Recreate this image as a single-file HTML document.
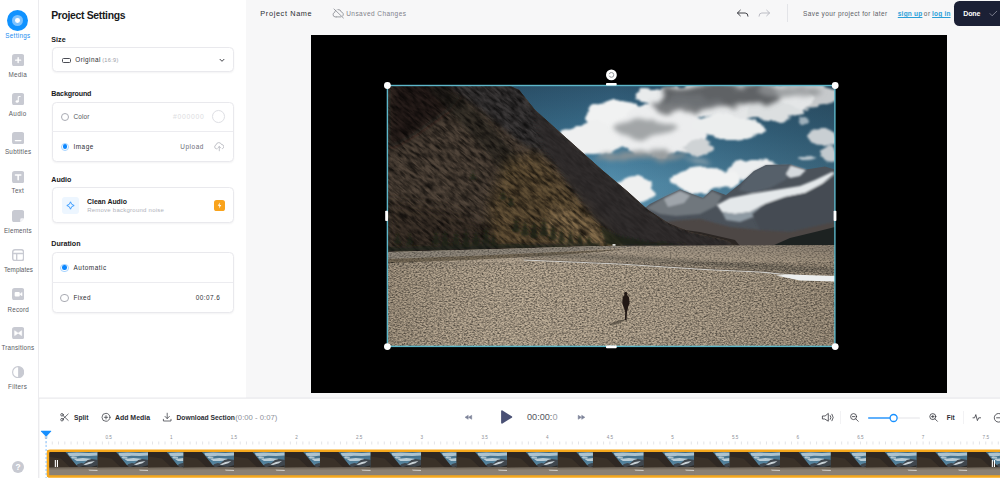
<!DOCTYPE html>
<html><head><meta charset="utf-8"><title>Editor</title>
<style>
*{box-sizing:border-box;margin:0;padding:0}
html,body{width:1000px;height:478px;overflow:hidden;background:#f7f7f8;font-family:"Liberation Sans",sans-serif;color:#18191b}
.abs{position:absolute}
#nav{position:absolute;left:0;top:0;width:38.8px;height:478px;background:#fff;border-right:1px solid #ebebee}
#panel{position:absolute;left:38.8px;top:0;width:207.2px;height:398px;background:#fff}
.box{position:absolute;left:51.5px;width:182.2px;border:1px solid #e9e9ed;border-radius:4.5px;background:#fff;box-shadow:0 1px 2px rgba(20,20,40,.05)}
.hr{position:absolute;left:52px;width:181px;height:1px;background:#ececf0}
.t{position:absolute;white-space:nowrap;line-height:1}
.radio{position:absolute;width:8.2px;height:8.2px;border-radius:50%;border:.8px solid #a9abb3;background:#fff}
.radio.on{border:1px solid #a5d3ff}
.radio.on::after{content:"";position:absolute;left:.9px;top:.9px;width:4.4px;height:4.4px;border-radius:50%;background:#0a86ff}
.ic{position:absolute;left:11.7px;width:12.3px;height:12.3px}
#canvas{position:absolute;left:311px;top:35px;width:636px;height:358px;background:#000}
#tl{position:absolute;left:39.8px;top:398px;width:961px;height:80px;background:#fff}
</style></head><body>
<div id="nav"></div>
<div id="panel"></div>
<!-- nav icons -->
<div class="abs" style="left:7.3px;top:10px;width:21px;height:21px;border-radius:50%;background:#0f92ff"></div>
<div class="abs" style="left:12.2px;top:14.900px;width:11.2px;height:11.2px;border-radius:50%;background:#7cc2ff"></div>
<div class="abs" style="left:15.4px;top:18.100px;width:4.8px;height:4.8px;border-radius:50%;background:#fff"></div>
<svg class="ic" style="top:53.700px" viewBox="0 0 12 12"><rect width="12" height="12" rx="2.600" fill="#c8cad2"/><path d="M6 3.600v4.800M3.600 6h4.800" stroke="#fff" stroke-width="1.400" stroke-linecap="round"/></svg>
<svg class="ic" style="top:92.700px" viewBox="0 0 12 12"><rect width="12" height="12" rx="2.600" fill="#c8cad2"/><ellipse cx="5" cy="8.300" rx="1.500" ry="1.200" fill="#fff"/><path d="M6.100 8.300V3.800Q6.800 3.200 8 3.400" stroke="#fff" stroke-width="1" fill="none" stroke-linecap="round"/></svg>
<svg class="ic" style="top:131.700px" viewBox="0 0 12 12"><rect width="12" height="12" rx="2.600" fill="#c8cad2"/><path d="M3.300 8.400h5.400" stroke="#fff" stroke-width="1.300" stroke-linecap="round"/></svg>
<svg class="ic" style="top:170.700px" viewBox="0 0 12 12"><rect width="12" height="12" rx="2.600" fill="#c8cad2"/><path d="M3.400 4h5.200M6 4v4.600" stroke="#fff" stroke-width="1.500" stroke-linecap="round"/></svg>
<svg class="ic" style="top:209.700px" viewBox="0 0 12 12"><path d="M2.600 0h6.800a2.600 2.600 0 0 1 2.600 2.600v5.400l-4 4h-5.400a2.600 2.600 0 0 1 -2.600 -2.600v-6.800a2.600 2.600 0 0 1 2.600 -2.600z" fill="#c8cad2"/><path d="M12 8l-4 4v-2.600a1.400 1.400 0 0 1 1.400 -1.400z" fill="#f6f6f9"/></svg>
<svg class="ic" style="top:248.700px" viewBox="0 0 12 12"><rect x=".7" y=".7" width="10.600" height="10.600" rx="2.200" fill="#fff" stroke="#c8cad2" stroke-width="1.400"/><path d="M1 4.400h10M4.600 4.400v6.600" stroke="#c8cad2" stroke-width="1.300"/></svg>
<svg class="ic" style="top:287.700px" viewBox="0 0 12 12"><rect width="12" height="12" rx="2.600" fill="#c8cad2"/><rect x="2.600" y="3.800" width="5" height="4.400" rx="1" fill="#fff"/><path d="M7.600 6l2.200 -1.700v3.400z" fill="#fff" stroke="#fff" stroke-width=".5" stroke-linejoin="round"/></svg>
<svg class="ic" style="top:326.700px" viewBox="0 0 12 12"><rect width="12" height="12" rx="2.600" fill="#c8cad2"/><path d="M2.600 3.600l3.400 2.400l-3.400 2.400zM9.400 3.600l-3.400 2.400l3.400 2.400z" fill="#fff" stroke="#fff" stroke-width=".6" stroke-linejoin="round"/></svg>
<svg class="ic" style="top:365.700px" viewBox="0 0 12 12"><circle cx="6" cy="6" r="5.400" fill="#fff" stroke="#c8cad2" stroke-width="1.100"/><path d="M6 .6a5.400 5.400 0 0 1 0 10.800z" fill="#c8cad2"/></svg>
<div class="abs" style="left:11.6px;top:460.800px;width:12.4px;height:12.4px;border-radius:50%;background:#c8cad2"></div>
<div class="t" style="left:15.5px;top:462.800px;font-size:8.400px;font-weight:bold;color:#fff">?</div>
<!-- panel boxes -->
<div class="box" style="top:47.200px;height:25.200px"></div>
<div class="abs" style="left:62px;top:57.600px;width:8.600px;height:5px;border:.8px solid #4a4c54;border-radius:1.500px"></div>
<svg class="abs" style="left:219px;top:57.500px" width="6" height="5" viewBox="0 0 6 5"><path d="M1 1.300l2 2l2 -2" fill="none" stroke="#2b2d33" stroke-width=".9" stroke-linecap="round" stroke-linejoin="round"/></svg>
<div class="box" style="top:101.500px;height:60.300px"></div>
<div class="hr" style="top:130.800px"></div>
<div class="radio" style="left:60.700px;top:112.600px"></div>
<div class="abs" style="left:212.100px;top:110.300px;width:12.800px;height:12.800px;border-radius:50%;border:.9px solid #dedfe4;background:#fff"></div>
<div class="radio on" style="left:60.700px;top:142.600px"></div>
<svg class="abs" style="left:213.500px;top:142px" width="10.500" height="9.500" viewBox="0 0 10.500 9.500"><g fill="none" stroke="#a9abb3" stroke-width=".7" stroke-linecap="round" stroke-linejoin="round"><path d="M3 6.800h-.600a2 2 0 0 1 -.300 -3.900a2.800 2.800 0 0 1 5.400 -.400a2.200 2.200 0 0 1 1 4.200"/><path d="M5.300 8.800v-4.200M3.900 5.900l1.400 -1.400l1.400 1.400"/></g></svg>
<div class="box" style="top:187.300px;height:35.800px"></div>
<div class="abs" style="left:61.600px;top:197px;width:17px;height:17px;border-radius:3px;background:#edf6ff"></div>
<svg class="abs" style="left:65.500px;top:201.200px" width="9" height="9" viewBox="0 0 9 9"><path d="M4.500 .8Q5 3.900 8.200 4.500Q5 5.100 4.500 8.200Q4 5.100 .8 4.500Q4 3.900 4.500 .8Z" fill="none" stroke="#1a8cff" stroke-width=".8" stroke-linejoin="round"/></svg>
<div class="abs" style="left:214.300px;top:200.300px;width:10.600px;height:10.700px;border-radius:2.600px;background:#f9a31c"></div>
<svg class="abs" style="left:217.100px;top:202.300px" width="5" height="7" viewBox="0 0 5 7"><path d="M3 .4L.7 3.800h1.700L2 6.600L4.300 3.100H2.600z" fill="#fff"/></svg>
<div class="box" style="top:252px;height:60.600px"></div>
<div class="hr" style="top:282px"></div>
<div class="radio on" style="left:60.400px;top:263.500px"></div>
<div class="radio" style="left:60.400px;top:293.700px"></div>
<!-- top bar -->
<svg class="abs" style="left:332px;top:8px" width="13" height="11" viewBox="0 0 13 11"><g fill="none" stroke="#7f818a" stroke-width=".75" stroke-linecap="round" stroke-linejoin="round"><path d="M4.200 8.900h-1a2.300 2.300 0 0 1 -.500 -4.500a3.300 3.300 0 0 1 1.200 -2.300M5.900 1.500a3.300 3.300 0 0 1 3.500 2.600a2.400 2.400 0 0 1 1.300 4M4.200 8.900h4.600"/><path d="M2 1l9.400 9"/></g></svg>
<svg class="abs" style="left:735.500px;top:8px" width="36" height="11" viewBox="0 0 36 11"><g fill="none" stroke-width=".9" stroke-linecap="round" stroke-linejoin="round"><path d="M4.300 2.200L1.400 5l2.900 2.800M1.600 5h7.600q2.800 0 2.800 3.200" stroke="#2b2d33"/><path d="M30.700 2.200L33.600 5l-2.900 2.800M33.400 5h-7.600q-2.800 0 -2.800 3.200" stroke="#b4b6be"/></g></svg>
<div class="abs" style="left:787.200px;top:4px;width:.9px;height:17.500px;background:#e3e4e8"></div>
<div class="abs" style="left:953.800px;top:.8px;width:60px;height:25.200px;background:#1b2035;border-radius:5.500px 0 0 5.500px"></div>
<svg class="abs" style="left:989px;top:10px" width="9" height="7" viewBox="0 0 9 7"><path d="M1 3.600l2.100 2.200l4.700 -4.600" fill="none" stroke="#8e91a0" stroke-width=".8" stroke-linecap="round" stroke-linejoin="round"/></svg>
<div class="t" style="left:5.27px;top:32.52px;font-size:6.3px;font-weight:normal;color:#1b8cf0;letter-spacing:0.320px;">Settings</div>
<div class="t" style="left:8.62px;top:71.72px;font-size:6.3px;font-weight:normal;color:#5a5c64;letter-spacing:0.225px;">Media</div>
<div class="t" style="left:8.82px;top:110.62px;font-size:6.3px;font-weight:normal;color:#5a5c64;letter-spacing:0.312px;">Audio</div>
<div class="t" style="left:4.92px;top:149.22px;font-size:6.3px;font-weight:normal;color:#5a5c64;letter-spacing:0.262px;">Subtitles</div>
<div class="t" style="left:11.62px;top:188.12px;font-size:6.3px;font-weight:normal;color:#5a5c64;letter-spacing:0.165px;">Text</div>
<div class="t" style="left:3.92px;top:227.52px;font-size:6.3px;font-weight:normal;color:#5a5c64;letter-spacing:0.215px;">Elements</div>
<div class="t" style="left:3.92px;top:266.72px;font-size:6.3px;font-weight:normal;color:#5a5c64;letter-spacing:0.032px;">Templates</div>
<div class="t" style="left:7.52px;top:306.52px;font-size:6.3px;font-weight:normal;color:#5a5c64;letter-spacing:0.189px;">Record</div>
<div class="t" style="left:1.52px;top:344.82px;font-size:6.3px;font-weight:normal;color:#5a5c64;letter-spacing:0.199px;">Transitions</div>
<div class="t" style="left:8.12px;top:384.02px;font-size:6.3px;font-weight:normal;color:#5a5c64;letter-spacing:0.267px;">Filters</div>
<div class="t" style="left:51.13px;top:11.22px;font-size:10.4px;font-weight:bold;color:#18191b;letter-spacing:-0.314px;">Project Settings</div>
<div class="t" style="left:51.32px;top:36.63px;font-size:7.1px;font-weight:bold;color:#18191b;letter-spacing:0.050px;">Size</div>
<div class="t" style="left:75.22px;top:57.07px;font-size:6.4px;font-weight:normal;color:#2b2d33;letter-spacing:0.448px;">Original</div>
<div class="t" style="left:102.16px;top:57.56px;font-size:5.6px;font-weight:normal;color:#9a9ca5;letter-spacing:0.309px;">(16:9)</div>
<div class="t" style="left:51.32px;top:90.53px;font-size:7.1px;font-weight:bold;color:#18191b;letter-spacing:-0.143px;">Background</div>
<div class="t" style="left:73.42px;top:113.87px;font-size:6.4px;font-weight:normal;color:#55575e;letter-spacing:0.172px;">Color</div>
<div class="t" style="left:172.99px;top:113.88px;font-size:6.8px;font-weight:normal;color:#dcdde1;letter-spacing:0.725px;">#000000</div>
<div class="t" style="left:73.42px;top:143.57px;font-size:6.4px;font-weight:normal;color:#2b2d33;letter-spacing:0.551px;">Image</div>
<div class="t" style="left:180.32px;top:143.87px;font-size:6.4px;font-weight:normal;color:#6a6c75;letter-spacing:0.560px;">Upload</div>
<div class="t" style="left:51.32px;top:176.53px;font-size:7.1px;font-weight:bold;color:#18191b;letter-spacing:0.002px;">Audio</div>
<div class="t" style="left:87.09px;top:198.63px;font-size:6.9px;font-weight:bold;color:#18191b;letter-spacing:-0.013px;">Clean Audio</div>
<div class="t" style="left:87.14px;top:207.47px;font-size:6.0px;font-weight:normal;color:#b0b2ba;letter-spacing:0.247px;">Remove background noise</div>
<div class="t" style="left:51.32px;top:241.13px;font-size:7.1px;font-weight:bold;color:#18191b;letter-spacing:0.004px;">Duration</div>
<div class="t" style="left:73.52px;top:265.27px;font-size:6.4px;font-weight:normal;color:#2b2d33;letter-spacing:0.531px;">Automatic</div>
<div class="t" style="left:73.52px;top:294.67px;font-size:6.4px;font-weight:normal;color:#2b2d33;letter-spacing:0.357px;">Fixed</div>
<div class="t" style="left:195.72px;top:294.67px;font-size:6.4px;font-weight:normal;color:#2b2d33;letter-spacing:0.473px;">00:07.6</div>
<div class="t" style="left:260.36px;top:9.83px;font-size:7.3px;font-weight:normal;color:#2b2d33;letter-spacing:0.643px;">Project Name</div>
<div class="t" style="left:346.21px;top:11.02px;font-size:6.5px;font-weight:normal;color:#7f818a;letter-spacing:0.450px;">Unsaved Changes</div>
<div class="t" style="left:803.11px;top:10.92px;font-size:6.5px;font-weight:normal;color:#5c5e66;letter-spacing:0.371px;">Save your project for later</div>
<div class="t" style="left:897.81px;top:10.92px;font-size:6.5px;font-weight:bold;color:#2a9fd8;letter-spacing:0.212px;text-decoration:underline;text-decoration-thickness:.5px;text-underline-offset:1px">sign up</div>
<div class="t" style="left:923.81px;top:10.92px;font-size:6.5px;font-weight:normal;color:#5c5e66;letter-spacing:0.599px;">or</div>
<div class="t" style="left:932.11px;top:10.92px;font-size:6.5px;font-weight:bold;color:#2a9fd8;letter-spacing:0.187px;text-decoration:underline;text-decoration-thickness:.5px;text-underline-offset:1px">log in</div>
<div class="t" style="left:963.28px;top:10.18px;font-size:7.0px;font-weight:bold;color:#ffffff;letter-spacing:-0.120px;">Done</div>
<div id="canvas"></div>
<svg id="photo" class="abs" style="left:388px;top:86px" width="447" height="260" viewBox="388 86 447 260" preserveAspectRatio="none">
 <defs>
  <linearGradient id="sky" x1="0" y1="0" x2="0" y2="1">
   <stop offset="0" stop-color="#2e5670"/><stop offset=".3" stop-color="#3b708e"/><stop offset=".6" stop-color="#548eac"/><stop offset="1" stop-color="#6299b5"/>
  </linearGradient>
  <linearGradient id="skyv" x1="0" y1="0" x2="1" y2="0">
   <stop offset="0" stop-color="#10222f" stop-opacity=".35"/><stop offset=".5" stop-color="#10222f" stop-opacity="0"/><stop offset="1" stop-color="#1c2f3b" stop-opacity=".4"/>
  </linearGradient>
  <linearGradient id="mtn" x1="0" y1="0" x2="1" y2="1">
   <stop offset="0" stop-color="#241e19"/><stop offset=".4" stop-color="#372d24"/><stop offset=".7" stop-color="#46392b"/><stop offset="1" stop-color="#4c3f2f"/>
  </linearGradient>
  <linearGradient id="gnd" x1="0" y1="0" x2="0" y2="1">
   <stop offset="0" stop-color="#9c8f7e"/><stop offset=".25" stop-color="#bfae96"/><stop offset="1" stop-color="#c0af97"/>
  </linearGradient>
  <linearGradient id="gndv" x1="0" y1="0" x2="1" y2="0">
   <stop offset="0" stop-color="#000" stop-opacity=".1"/><stop offset=".3" stop-color="#fff" stop-opacity=".05"/><stop offset="1" stop-color="#000" stop-opacity=".12"/>
  </linearGradient>
  <filter id="blur2" x="-20%" y="-20%" width="140%" height="140%"><feGaussianBlur stdDeviation="2.2"/></filter>
  <filter id="blur4" x="-20%" y="-20%" width="140%" height="140%"><feGaussianBlur stdDeviation="5"/></filter>
  <filter id="blur1" x="-20%" y="-20%" width="140%" height="140%"><feGaussianBlur stdDeviation=".8"/></filter>
  <filter id="cloud" x="-10%" y="-10%" width="120%" height="120%">
   <feTurbulence type="fractalNoise" baseFrequency="0.045 0.07" numOctaves="3" seed="3" result="n"/>
   <feDisplacementMap in="SourceGraphic" in2="n" scale="14" xChannelSelector="R" yChannelSelector="G" result="d"/>
   <feGaussianBlur in="d" stdDeviation="1.3"/>
  </filter>
  <filter id="cloud2" x="-10%" y="-20%" width="120%" height="140%">
   <feTurbulence type="fractalNoise" baseFrequency="0.04 0.08" numOctaves="3" seed="8" result="n"/>
   <feDisplacementMap in="SourceGraphic" in2="n" scale="16" xChannelSelector="R" yChannelSelector="G" result="d"/>
   <feGaussianBlur in="d" stdDeviation="2.4"/>
  </filter>
  <filter id="rock" x="0" y="0" width="100%" height="100%">
   <feTurbulence type="fractalNoise" baseFrequency="0.09 0.4" numOctaves="4" seed="4" result="n"/>
   <feColorMatrix in="n" type="matrix" values="0 0 0 0 0  0 0 0 0 0  0 0 0 0 0  2.6 0 0 0 -1.0" result="a"/>
   <feComposite in="a" in2="SourceGraphic" operator="in"/>
  </filter>
  <filter id="rockl" x="0" y="0" width="100%" height="100%">
   <feTurbulence type="fractalNoise" baseFrequency="0.08 0.36" numOctaves="4" seed="17" result="n"/>
   <feColorMatrix in="n" type="matrix" values="0 0 0 0 0  0 0 0 0 0  0 0 0 0 0  2.8 0 0 0 -1.25" result="a"/>
   <feComposite in="a" in2="SourceGraphic" operator="in"/>
  </filter>
  <filter id="gravel" x="0" y="0" width="100%" height="100%">
   <feTurbulence type="fractalNoise" baseFrequency="0.5 0.8" numOctaves="2" seed="9" result="n"/>
   <feColorMatrix in="n" type="matrix" values="0 0 0 0 0  0 0 0 0 0  0 0 0 0 0  2.4 0 0 0 -0.95" result="a"/>
   <feComposite in="a" in2="SourceGraphic" operator="in"/>
  </filter>
  <filter id="gravell" x="0" y="0" width="100%" height="100%">
   <feTurbulence type="fractalNoise" baseFrequency="0.45 0.75" numOctaves="2" seed="21" result="n"/>
   <feColorMatrix in="n" type="matrix" values="0 0 0 0 0  0 0 0 0 0  0 0 0 0 0  2.4 0 0 0 -1.0" result="a"/>
   <feComposite in="a" in2="SourceGraphic" operator="in"/>
  </filter>
  <clipPath id="pclip"><rect x="388" y="86" width="447" height="260"/></clipPath>
  <clipPath id="mclip"><path d="M388 86 L510 86 L519 90 L535 110 L602 170 L627 191 L648 210 L669 223.500 L690 232 L712 237 L727 240.500 L736 245 L700 246 L600 246 L500 249 L388 252Z"/></clipPath>
 </defs>
 <g clip-path="url(#pclip)">
 <rect x="388" y="86" width="447" height="162" fill="url(#sky)"/>
 <rect x="388" y="86" width="447" height="162" fill="url(#skyv)"/>
 <!-- clouds -->
 <g filter="url(#cloud)">
  <ellipse cx="800" cy="95" rx="44" ry="12" fill="#c6c9cb"/>
  <ellipse cx="728" cy="100" rx="84" ry="17" fill="#e4e6e7"/>
  <ellipse cx="650" cy="97" rx="16" ry="8" fill="#e9ebec"/>
  <ellipse cx="612" cy="116" rx="28" ry="14" fill="#f1f2f2"/>
  <ellipse cx="592" cy="139" rx="32" ry="16" fill="#eff0f0"/>
  <ellipse cx="662" cy="131" rx="46" ry="26" fill="#ecedee"/>
  <ellipse cx="728" cy="127" rx="34" ry="12" fill="#eceeee"/>
  <ellipse cx="775" cy="111" rx="30" ry="8" fill="#dcdfe0"/>
  <ellipse cx="700" cy="148" rx="16" ry="7" fill="#cfd3d5"/>
  <ellipse cx="822" cy="137" rx="13" ry="9" fill="#c9cfd3"/>
  <ellipse cx="829" cy="154" rx="8" ry="9" fill="#c2c9ce"/>
  <ellipse cx="806" cy="120" rx="7" ry="3" fill="#9fb0bb"/>
  <ellipse cx="806" cy="160" rx="9" ry="3" fill="#b9c6ce"/>
  <ellipse cx="758" cy="169" rx="32" ry="9" fill="#eceeef"/>
  <ellipse cx="706" cy="179" rx="36" ry="12" fill="#f1f2f2"/>
  <ellipse cx="635" cy="190" rx="19" ry="13" fill="#eff0f0"/>
 </g>
 <g filter="url(#cloud2)">
  <ellipse cx="722" cy="96" rx="62" ry="12" fill="#5f6265"/>
  <ellipse cx="690" cy="104" rx="36" ry="8" fill="#6e7174" opacity=".9"/>
  <ellipse cx="790" cy="91" rx="36" ry="5" fill="#8d9194" opacity=".8"/>
  <ellipse cx="644" cy="128" rx="32" ry="9" fill="#9a9da0" opacity=".9"/>
  <ellipse cx="640" cy="155" rx="48" ry="5" fill="#8f9396" opacity=".9"/>
  <ellipse cx="700" cy="160" rx="10" ry="3" fill="#a9b4ba" opacity=".8"/>
 </g>
 <!-- snow mountain -->
 <path d="M640 212 L650 204 L666 196 L680 189.500 L692 194 L703 198 L712 190 L726 195 L740 184 L754 171 L766 165 L791 164.500 L806 169.500 L825 166.500 L835 169.500 L835 248 L640 248Z" fill="#4b525a"/>
 <g filter="url(#blur1)">
  <path d="M646 208 L666 196.500 L680 190 L692 194.500 L703 198.500 L712 191 L722 196 L716 206 L700 214 L676 216 L660 214Z" fill="#70777d"/>
  <path d="M664 199 L680 191 L690 195.500 L684 203 L668 207Z" fill="#a4aab0" opacity=".9"/>
  <path d="M738 190 L748 177 L754 171.500 L766 165.500 L791 165 L795 170 L785 180 L770 188 L752 193Z" fill="#56616b"/>
  <path d="M791 165.500 L806 170 L800 176 L790 178 L786 174Z" fill="#d5dade"/>
  <path d="M717 205 L730 198 L750 194 L775 190 L800 186 L815 180 L832 172 L835 173 L822 184 L805 193 L785 197 L765 204 L750 212 L735 214 L722 212Z" fill="#e4e8ea"/>
  <path d="M722 212 L735 214 L750 212 L760 207 L756 216 L740 222 L726 220Z" fill="#8e9aa3"/>
  <path d="M765 204 L785 197 L805 193 L822 184 L835 176 L835 224 L790 232 L760 230 L752 214Z" fill="#454b52"/>
  <path d="M640 230 L670 221 L700 219 L730 227 L760 230 L790 232 L835 222 L835 248 L640 248Z" fill="#4e4744"/>
 </g>
 <path d="M655 226 L700 232 L735 240 L740 246 L640 247Z" fill="#2b2623"/>
 <path d="M772 246 L790 238 L815 232 L835 227 L835 247Z" fill="#1d2221"/>
 <!-- main mountain -->
 <path d="M388 86 L510 86 L519 90 L535 110 L602 170 L627 191 L648 210 L669 223.500 L690 232 L712 237 L727 240.500 L736 245 L700 246 L600 246 L500 249 L388 252Z" fill="url(#mtn)"/>
 <g clip-path="url(#mclip)">
  <path d="M388 86 L731 86 L731 252 L388 252Z" fill="#51453a"/>
  <path d="M388 70 L480 70 L450 110 L415 135 L388 150Z" fill="#15110e" opacity=".7" filter="url(#blur4)"/>
  <path d="M388 200 L450 210 L520 236 L540 252 L388 256Z" fill="#352c23" opacity=".6" filter="url(#blur4)"/>
  <path d="M440 80 L515 80 L535 110 L602 170 L627 191 L648 210 L669 223.500 L690 232 L712 237 L727 240.500 L738 246 L628 248 L592 216 L556 164 L520 142 L478 108Z" fill="#3a3738" filter="url(#blur2)"/>
  <path d="M426 86 L446 86 L480 114 L512 150 L540 196 L556 232 L540 240 L520 204 L494 160 L462 124Z" fill="#22231b" opacity=".55" filter="url(#blur2)"/>
  <path d="M506 160 L538 152 L574 190 L624 247 L494 249 L488 206Z" fill="#6a5638" opacity=".8" filter="url(#blur4)"/><path d="M552 204 L574 210 L600 228 L626 247 L556 249 L544 228Z" fill="#8a7250" opacity=".8" filter="url(#blur2)"/>
  <rect transform="rotate(40 560 170)" x="300" y="-60" width="540" height="470" fill="#120e0b" filter="url(#rock)" opacity=".5"/>
  <rect transform="rotate(40 560 170)" x="300" y="-60" width="540" height="470" fill="#a08f79" filter="url(#rockl)" opacity=".6"/>
  <path d="M530 104 L602 170 L627 191 L648 210 L669 223.500 L690 232 L712 237 L727 240.500 L740 247 L630 249 L594 218 L562 176 L542 146Z" fill="#2f2c2b" opacity=".72" filter="url(#blur2)"/>
 </g>
 <!-- trees -->
 <g fill="#1d2118" opacity=".8" filter="url(#blur1)">
  <path d="M394 244 l3.500 -12 l3.500 12z M406 246 l3.500 -14 l3.500 12z M432 244 l4 -16 l4 16z M441 246 l4 -18 l4 18z M452 245 l4 -15 l4 15z M462 247 l4 -20 l4 20z M472 246 l4 -17 l4 17z M482 244 l4 -19 l4 19z M490 246 l3.500 -14 l3.500 14z M512 232 l4 -16 l4 16z M521 236 l4 -17 l4 17z M530 238 l4 -18 l4 18z M540 236 l4 -20 l4 20z M549 240 l4 -17 l4 17z M558 242 l3.500 -15 l3.500 15z M567 243 l3.500 -14 l3.500 14z M577 243 l3 -12 l3 12z M586 245 l3 -11 l3 11z M500 200 l3 -12 l3 12z M508 206 l3 -12 l3 12z M470 180 l3 -10 l3 10z"/>
  <path d="M600 226 L620 236 L650 242 L690 244 L640 246 L606 245Z"/>
  <path d="M388 247 L500 244 L600 243 L600 247 L500 249.500 L388 252.500Z" opacity=".8"/>
 </g>
 <!-- ground -->
 <path d="M388 252 L500 249 L600 246 L835 245 L835 346 L388 346Z" fill="url(#gnd)"/>
 <path d="M388 252 L500 249 L600 246 L835 245 L835 346 L388 346Z" fill="url(#gndv)"/>
 <path d="M388 252 L500 249 L600 246 L640 246 L560 252 L470 256 L388 259Z" fill="#8e867a"/>
 <path d="M388 259 L470 256 L560 252 L630 249 L560 255 L470 260 L388 263Z" fill="#675b49" opacity=".8"/>
 <path d="M510 257 L600 260 L700 266 L790 272 L835 274 L835 268 L700 260 L600 254 L540 254Z" fill="#5a544c" opacity=".45" filter="url(#blur1)"/>
 <path d="M388 252 L500 249 L600 246 L835 245 L835 346 L388 346Z" fill="#3a3025" filter="url(#gravel)" opacity=".36"/>
 <path d="M388 262 L835 262 L835 346 L388 346Z" fill="#dccdb6" filter="url(#gravell)" opacity=".45"/>
 <path d="M524 260 L620 264 L705 269.500 L760 272 L800 276" stroke="#d4d4d2" stroke-width="1.200" fill="none" opacity=".9"/>
 <path d="M524 259 L620 263 L705 268.500 L760 271 L800 274" stroke="#4d463d" stroke-width=".8" fill="none" opacity=".6"/>
 <path d="M776 275.500 L790 274.500 L835 276 L835 281.500 L800 280.500Z" fill="#eceeee"/>
 <rect x="612.500" y="244" width="3" height="1.800" fill="#d9d9d6"/>
 <!-- person -->
 <ellipse cx="617" cy="322.500" rx="8" ry="1.300" fill="#3f382f" opacity=".6" transform="rotate(-18 617 322.500)"/>
 <path d="M624.500 295 a1.700 1.900 0 1 1 2.600 0 l1.900 2.200 l.6 6.300 l-1.500 3.500 l-1.100 5.500 l-.5 7.700 l-1.700 0 l.4 -7.700 l-1.200 -4.500 l-1.700 -4.500 l.4 -6.300z" fill="#211815"/>
 </g>
</svg>

<div id="tl"></div>
<svg id="sel" class="abs" style="left:370px;top:60px" width="490" height="300" viewBox="370 60 490 300">
 <rect x="387.400" y="85.500" width="447.500" height="260.900" fill="none" stroke="#5db7ca" stroke-width="1.400"/>
 <g fill="#fff">
  <circle cx="387.400" cy="85.500" r="3.400"/><circle cx="835.200" cy="85.500" r="3.400"/><circle cx="387.400" cy="346.600" r="3.400"/><circle cx="835.200" cy="346.600" r="3.400"/>
  <rect x="606" y="83" width="10.700" height="2.600" rx=".8"/><rect x="606" y="345.600" width="10.700" height="2.600" rx=".8"/>
  <rect x="385.200" y="210.800" width="2.800" height="10.300" rx=".8"/><rect x="833.600" y="210.800" width="2.800" height="10.300" rx=".8"/>
  <circle cx="611.400" cy="74.900" r="5.400"/>
 </g>
 <circle cx="611.400" cy="74.900" r="2.400" fill="none" stroke="#8a8c92" stroke-width=".9" stroke-dasharray="6 1.500"/>
</svg>

<svg id="tlsvg" class="abs" style="left:39px;top:397px" width="961" height="81" viewBox="39 397 961 81">
<defs>
 <linearGradient id="tsky" x1="0" y1="0" x2="0" y2="1"><stop offset="0" stop-color="#3c6680"/><stop offset="1" stop-color="#5e8ea8"/></linearGradient>
 <g id="thg">
  <rect x="0" y="0" width="52" height="17.500" fill="url(#tsky)"/>
  <path d="M21 2.600 L30 2 L42 2.600 L51 2 L51 5 L42 5.600 L34 5.200 L26 6.200 L22 5Z" fill="#b9ccd6" opacity=".9"/>
  <path d="M27 8.400 L36 7.600 L44 8.200 L44 10 L36 10.600 L30 10.400Z" fill="#cfdce2" opacity=".85"/>
  <path d="M24 6.500 L30 6.800 L30 8 L25.500 8Z" fill="#dfe7ea" opacity=".8"/>
  <path d="M27 17.500 L31 13.500 L34.500 12.500 L37 13 L41 9.500 L45 8.500 L52 9.500 L52 17.500Z" fill="#3f464d"/>
  <path d="M36.500 14 L42 11.600 L48 10.400 L45 12.800 L39 14.600Z" fill="#c9d2d7"/><path d="M30 17.500 L36 15.500 L44 16.500 L52 14.500 L52 17.500Z" fill="#2b2927"/>
  <path d="M0 0 L17.400 0 L22 5.500 L30.400 15.800 L33 17.600 L0 17.800Z" fill="#2f2823"/>
  <path d="M0 6 L14 8 L24 17.600 L0 17.800Z" fill="#3d3329" opacity=".8"/>
  <path d="M0 17.300 L22 17 L52 16.800 L52 26 L0 26Z" fill="#8b8073"/>
  <path d="M0 17.300 L22 17 L52 16.800 L52 18.600 L0 19Z" fill="#6f665b" opacity=".7"/>
  <path d="M41.500 19.300 L51 19.600 L51 20.300 L42.500 20Z" fill="#e6e7e6"/>
 </g>
</defs>
<rect x="39" y="397.600" width="961" height="1" fill="#e4e4e8"/>
<path d="M46.00 441.500v3 M52.27 441.500v3 M58.53 441.500v3 M64.80 441.500v3 M71.06 441.500v3 M77.33 441.500v3 M83.59 441.500v3 M89.85 441.500v3 M96.12 441.500v3 M102.38 441.500v3 M108.65 441.500v3 M114.91 441.500v3 M121.18 441.500v3 M127.44 441.500v3 M133.71 441.500v3 M139.97 441.500v3 M146.24 441.500v3 M152.50 441.500v3 M158.77 441.500v3 M165.03 441.500v3 M171.30 441.500v3 M177.56 441.500v3 M183.83 441.500v3 M190.09 441.500v3 M196.36 441.500v3 M202.62 441.500v3 M208.89 441.500v3 M215.16 441.500v3 M221.42 441.500v3 M227.69 441.500v3 M233.95 441.500v3 M240.22 441.500v3 M246.48 441.500v3 M252.74 441.500v3 M259.01 441.500v3 M265.27 441.500v3 M271.54 441.500v3 M277.80 441.500v3 M284.07 441.500v3 M290.33 441.500v3 M296.60 441.500v3 M302.87 441.500v3 M309.13 441.500v3 M315.39 441.500v3 M321.66 441.500v3 M327.93 441.500v3 M334.19 441.500v3 M340.45 441.500v3 M346.72 441.500v3 M352.98 441.500v3 M359.25 441.500v3 M365.51 441.500v3 M371.78 441.500v3 M378.04 441.500v3 M384.31 441.500v3 M390.57 441.500v3 M396.84 441.500v3 M403.10 441.500v3 M409.37 441.500v3 M415.63 441.500v3 M421.90 441.500v3 M428.16 441.500v3 M434.43 441.500v3 M440.69 441.500v3 M446.96 441.500v3 M453.22 441.500v3 M459.49 441.500v3 M465.75 441.500v3 M472.02 441.500v3 M478.28 441.500v3 M484.55 441.500v3 M490.81 441.500v3 M497.08 441.500v3 M503.34 441.500v3 M509.61 441.500v3 M515.88 441.500v3 M522.14 441.500v3 M528.40 441.500v3 M534.67 441.500v3 M540.93 441.500v3 M547.20 441.500v3 M553.46 441.500v3 M559.73 441.500v3 M566.00 441.500v3 M572.26 441.500v3 M578.52 441.500v3 M584.79 441.500v3 M591.05 441.500v3 M597.32 441.500v3 M603.58 441.500v3 M609.85 441.500v3 M616.12 441.500v3 M622.38 441.500v3 M628.64 441.500v3 M634.91 441.500v3 M641.17 441.500v3 M647.44 441.500v3 M653.70 441.500v3 M659.97 441.500v3 M666.24 441.500v3 M672.50 441.500v3 M678.76 441.500v3 M685.03 441.500v3 M691.29 441.500v3 M697.56 441.500v3 M703.82 441.500v3 M710.09 441.500v3 M716.36 441.500v3 M722.62 441.500v3 M728.88 441.500v3 M735.15 441.500v3 M741.41 441.500v3 M747.68 441.500v3 M753.94 441.500v3 M760.21 441.500v3 M766.47 441.500v3 M772.74 441.500v3 M779.00 441.500v3 M785.27 441.500v3 M791.53 441.500v3 M797.80 441.500v3 M804.06 441.500v3 M810.33 441.500v3 M816.59 441.500v3 M822.86 441.500v3 M829.12 441.500v3 M835.39 441.500v3 M841.65 441.500v3 M847.92 441.500v3 M854.18 441.500v3 M860.45 441.500v3 M866.71 441.500v3 M872.98 441.500v3 M879.25 441.500v3 M885.51 441.500v3 M891.77 441.500v3 M898.04 441.500v3 M904.30 441.500v3 M910.57 441.500v3 M916.83 441.500v3 M923.10 441.500v3 M929.37 441.500v3 M935.63 441.500v3 M941.89 441.500v3 M948.16 441.500v3 M954.42 441.500v3 M960.69 441.500v3 M966.95 441.500v3 M973.22 441.500v3 M979.48 441.500v3 M985.75 441.500v3 M992.01 441.500v3 M998.28 441.500v3" stroke="#dcdde2" stroke-width=".8" fill="none"/>
<text x="46.0" y="439.300" font-size="4.600" fill="#8d8f98" text-anchor="middle" font-family="Liberation Sans, sans-serif">0</text>
<text x="108.7" y="439.300" font-size="4.600" fill="#8d8f98" text-anchor="middle" font-family="Liberation Sans, sans-serif">0.5</text>
<text x="171.3" y="439.300" font-size="4.600" fill="#8d8f98" text-anchor="middle" font-family="Liberation Sans, sans-serif">1</text>
<text x="233.9" y="439.300" font-size="4.600" fill="#8d8f98" text-anchor="middle" font-family="Liberation Sans, sans-serif">1.5</text>
<text x="296.6" y="439.300" font-size="4.600" fill="#8d8f98" text-anchor="middle" font-family="Liberation Sans, sans-serif">2</text>
<text x="359.2" y="439.300" font-size="4.600" fill="#8d8f98" text-anchor="middle" font-family="Liberation Sans, sans-serif">2.5</text>
<text x="421.9" y="439.300" font-size="4.600" fill="#8d8f98" text-anchor="middle" font-family="Liberation Sans, sans-serif">3</text>
<text x="484.6" y="439.300" font-size="4.600" fill="#8d8f98" text-anchor="middle" font-family="Liberation Sans, sans-serif">3.5</text>
<text x="547.2" y="439.300" font-size="4.600" fill="#8d8f98" text-anchor="middle" font-family="Liberation Sans, sans-serif">4</text>
<text x="609.9" y="439.300" font-size="4.600" fill="#8d8f98" text-anchor="middle" font-family="Liberation Sans, sans-serif">4.5</text>
<text x="672.5" y="439.300" font-size="4.600" fill="#8d8f98" text-anchor="middle" font-family="Liberation Sans, sans-serif">5</text>
<text x="735.1" y="439.300" font-size="4.600" fill="#8d8f98" text-anchor="middle" font-family="Liberation Sans, sans-serif">5.5</text>
<text x="797.8" y="439.300" font-size="4.600" fill="#8d8f98" text-anchor="middle" font-family="Liberation Sans, sans-serif">6</text>
<text x="860.4" y="439.300" font-size="4.600" fill="#8d8f98" text-anchor="middle" font-family="Liberation Sans, sans-serif">6.5</text>
<text x="923.1" y="439.300" font-size="4.600" fill="#8d8f98" text-anchor="middle" font-family="Liberation Sans, sans-serif">7</text>
<text x="985.8" y="439.300" font-size="4.600" fill="#8d8f98" text-anchor="middle" font-family="Liberation Sans, sans-serif">7.5</text>
<clipPath id="trk"><rect x="47.400" y="450.400" width="960" height="26.400" rx="1.500"/></clipPath>
<rect x="47.400" y="450.400" width="960" height="26.400" fill="#4a433c"/>
<g clip-path="url(#trk)">
<svg x="46.80" y="450.500" width="51.40" height="26" viewBox="0 0 51.40 26" preserveAspectRatio="none"><use href="#thg"/></svg>
<svg x="97.40" y="450.500" width="51.40" height="26" viewBox="0 0 51.40 26" preserveAspectRatio="none"><use href="#thg"/></svg>
<svg x="148.00" y="450.500" width="36.12" height="26" viewBox="0 0 36.12 26" preserveAspectRatio="none"><use href="#thg"/></svg>
<svg x="183.32" y="450.500" width="51.40" height="26" viewBox="0 0 51.40 26" preserveAspectRatio="none"><use href="#thg"/></svg>
<svg x="233.92" y="450.500" width="51.40" height="26" viewBox="0 0 51.40 26" preserveAspectRatio="none"><use href="#thg"/></svg>
<svg x="284.52" y="450.500" width="36.12" height="26" viewBox="0 0 36.12 26" preserveAspectRatio="none"><use href="#thg"/></svg>
<svg x="319.84" y="450.500" width="51.40" height="26" viewBox="0 0 51.40 26" preserveAspectRatio="none"><use href="#thg"/></svg>
<svg x="370.44" y="450.500" width="51.40" height="26" viewBox="0 0 51.40 26" preserveAspectRatio="none"><use href="#thg"/></svg>
<svg x="421.04" y="450.500" width="36.12" height="26" viewBox="0 0 36.12 26" preserveAspectRatio="none"><use href="#thg"/></svg>
<svg x="456.36" y="450.500" width="51.40" height="26" viewBox="0 0 51.40 26" preserveAspectRatio="none"><use href="#thg"/></svg>
<svg x="506.96" y="450.500" width="51.40" height="26" viewBox="0 0 51.40 26" preserveAspectRatio="none"><use href="#thg"/></svg>
<svg x="557.56" y="450.500" width="36.12" height="26" viewBox="0 0 36.12 26" preserveAspectRatio="none"><use href="#thg"/></svg>
<svg x="592.88" y="450.500" width="51.40" height="26" viewBox="0 0 51.40 26" preserveAspectRatio="none"><use href="#thg"/></svg>
<svg x="643.48" y="450.500" width="51.40" height="26" viewBox="0 0 51.40 26" preserveAspectRatio="none"><use href="#thg"/></svg>
<svg x="694.08" y="450.500" width="36.12" height="26" viewBox="0 0 36.12 26" preserveAspectRatio="none"><use href="#thg"/></svg>
<svg x="729.40" y="450.500" width="51.40" height="26" viewBox="0 0 51.40 26" preserveAspectRatio="none"><use href="#thg"/></svg>
<svg x="780.00" y="450.500" width="51.40" height="26" viewBox="0 0 51.40 26" preserveAspectRatio="none"><use href="#thg"/></svg>
<svg x="830.60" y="450.500" width="36.12" height="26" viewBox="0 0 36.12 26" preserveAspectRatio="none"><use href="#thg"/></svg>
<svg x="865.92" y="450.500" width="51.40" height="26" viewBox="0 0 51.40 26" preserveAspectRatio="none"><use href="#thg"/></svg>
<svg x="916.52" y="450.500" width="51.40" height="26" viewBox="0 0 51.40 26" preserveAspectRatio="none"><use href="#thg"/></svg>
<svg x="967.12" y="450.500" width="36.12" height="26" viewBox="0 0 36.12 26" preserveAspectRatio="none"><use href="#thg"/></svg>
</g>
<rect x="47.900" y="450.700" width="960" height="25.900" rx="2.200" fill="none" stroke="#f6a81c" stroke-width="2.500"/>
<rect x="54.800" y="460" width="1.100" height="7" fill="#fff"/><rect x="56.900" y="460" width="1.100" height="7" fill="#fff"/>
<rect x="991.800" y="460" width="1.100" height="7" fill="#fff"/><rect x="993.900" y="460" width="1.100" height="7" fill="#fff"/>
<path d="M41.300 430.800 H50.900 Q51.600 430.800 51.100 431.500 L46.600 436.200 Q46.100 436.700 45.600 436.200 L41.100 431.500 Q40.600 430.800 41.300 430.800Z" fill="#1790ff"/>
<path d="M46.100 437V478" stroke="#7cbcff" stroke-width=".9" stroke-dasharray="2 2" fill="none"/>
<g fill="none" stroke="#3a3c44" stroke-width=".75" stroke-linecap="round"><circle cx="62" cy="414.800" r="1.300"/><circle cx="62" cy="419.700" r="1.300"/><path d="M63.100 415.600 L68.200 420.400 M63.100 418.900 L68.200 414"/></g>
<text x="74" y="419.500" font-size="6.500" font-weight="bold" fill="#2b2d33" font-family="Liberation Sans, sans-serif" textLength="14.400" lengthAdjust="spacingAndGlyphs">Split</text>
<g fill="none" stroke="#3a3c44" stroke-width=".75" stroke-linecap="round"><circle cx="106" cy="417.300" r="4"/><path d="M104.300 417.300h3.400M106 415.600v3.400"/></g>
<text x="115" y="419.500" font-size="6.500" font-weight="bold" fill="#2b2d33" font-family="Liberation Sans, sans-serif" textLength="35" lengthAdjust="spacingAndGlyphs">Add Media</text>
<g fill="none" stroke="#3a3c44" stroke-width=".75" stroke-linecap="round" stroke-linejoin="round"><path d="M167.200 413.200v5.200M165 416.400l2.200 2.200l2.200 -2.200M163.400 419.300v1.700h7.600v-1.700"/></g>
<text x="176.500" y="419.500" font-size="6.500" font-weight="bold" fill="#2b2d33" font-family="Liberation Sans, sans-serif" textLength="58.500" lengthAdjust="spacingAndGlyphs">Download Section</text>
<text x="235.300" y="419.500" font-size="6.300" fill="#8e9099" font-family="Liberation Sans, sans-serif" textLength="42" lengthAdjust="spacingAndGlyphs">(0:00 - 0:07)</text>
<path d="M468.200 415.300v4l-3.200 -2z M471.700 415.300v4l-3.200 -2z" fill="#7d8399" stroke="#7d8399" stroke-width=".5" stroke-linejoin="round"/>
<path d="M502 411.200 L511.300 417 L502 422.800Z" fill="#4a5175" stroke="#4a5175" stroke-width="1.800" stroke-linejoin="round"/>
<text x="527" y="420.100" font-size="8.300" fill="#55575e" font-family="Liberation Sans, sans-serif" textLength="30.500" lengthAdjust="spacingAndGlyphs">00:00:<tspan fill="#9b9da6">0</tspan></text>
<path d="M578.200 415.300v4l3.200 -2z M581.700 415.300v4l3.200 -2z" fill="#7d8399" stroke="#7d8399" stroke-width=".5" stroke-linejoin="round"/>
<g fill="none" stroke="#33353c" stroke-width=".8" stroke-linecap="round" stroke-linejoin="round"><path d="M828.300 413.800v7.400l-3.600 -2.200h-2.300v-3h2.300z"/><path d="M830.300 415.600q1.400 1.900 0 3.800M832 414.200q2.600 3.300 0 6.600"/></g>
<rect x="840.200" y="411" width=".7" height="13" fill="#ededf0"/>
<g fill="none" stroke="#33353c" stroke-width=".8" stroke-linecap="round"><circle cx="853.600" cy="416.600" r="3"/><path d="M855.800 418.900l2.400 2.400M852.300 416.600h2.600"/></g>
<rect x="868" y="417.400" width="52" height="1.200" rx=".6" fill="#e3e4e8"/><rect x="868" y="417.300" width="26" height="1.400" rx=".7" fill="#2f9bff"/>
<circle cx="893.600" cy="418" r="3.500" fill="#fff" stroke="#1790ff" stroke-width="1.300"/>
<g fill="none" stroke="#33353c" stroke-width=".8" stroke-linecap="round"><circle cx="932.800" cy="416.600" r="3"/><path d="M935 418.900l2.400 2.400M931.500 416.600h2.600M932.800 415.300v2.600"/></g>
<text x="946.800" y="419.500" font-size="6.500" font-weight="bold" fill="#2b2d33" font-family="Liberation Sans, sans-serif" textLength="7.800" lengthAdjust="spacingAndGlyphs">Fit</text>
<rect x="963.300" y="411" width=".7" height="13" fill="#ededf0"/>
<path d="M973 417.800h1.600l1.200 -3.200l1.600 6l1.300 -2.800h1.900" fill="none" stroke="#33353c" stroke-width=".8" stroke-linecap="round" stroke-linejoin="round"/>
<g fill="none" stroke="#33353c" stroke-width=".8" stroke-linecap="round"><circle cx="998.600" cy="417.800" r="4.300"/><path d="M996.600 417.800h4"/></g>
</svg>

</body></html>
